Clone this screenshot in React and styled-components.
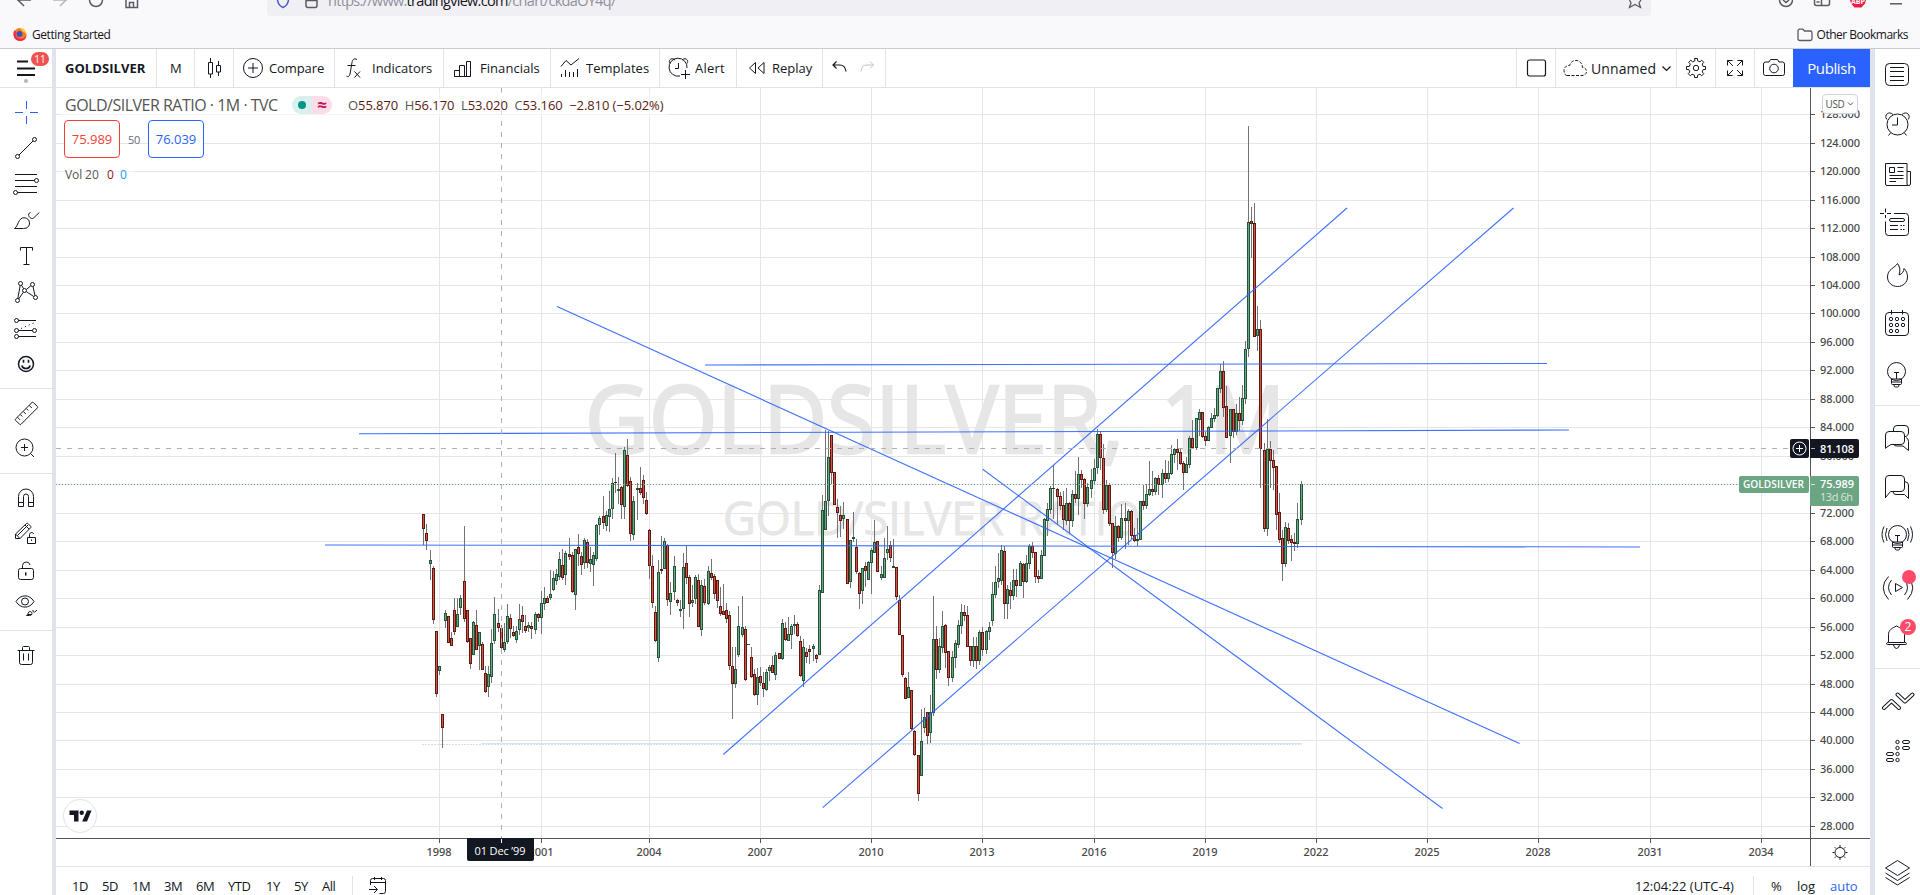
import React from 'react';
import styled, { createGlobalStyle } from 'styled-components';

const GlobalStyle = createGlobalStyle`
    * {
        box-sizing: border-box;
    }
    html, body {
        margin: 0;
        padding: 0;
        overflow: hidden;
    }
    body {
        font-family: "Open Sans", "Noto Sans", sans-serif;
        color: #131722;
        background: #fff;
    }
`;

const Page = styled.div`
    display: flex;
    flex-direction: column;
    width: 1920px;
    height: 895px;
    overflow: hidden;
    background: #fff;
`;

/* ---------- browser chrome ---------- */

const Browser = styled.header`
    display: flex;
    flex-direction: column;
    height: 49px;
    flex: none;
    background: #f9f9fb;
    border-bottom: 1px solid #cccccc;
`;

const NavRow = styled.div`
    display: flex;
    height: 16px;
    flex: none;
`;

const NavButtons = styled.div`
    width: 267px;
    height: 16px;
`;

const AddressBar = styled.div`
    display: flex;
    width: 1384px;
    height: 16px;
    background: #f0f0f4;
    border-radius: 0 0 4px 4px;
`;

const Address = styled.div`
    width: 1292px;
    height: 16px;
    margin-left: 1px;
    font-size: 14.5px;
    line-height: 2px;
    letter-spacing: ${({ $track }) => $track || 0}px;
    color: #8f8f9d;
    white-space: pre;
    b {
        font-weight: 400;
        color: #15141a;
    }
`;

const BookmarkRow = styled.div`
    display: flex;
    justify-content: space-between;
    align-items: center;
    height: 32px;
    padding: 5px 12px 0 12px;
`;

const Bookmark = styled.div`
    display: flex;
    align-items: center;
    gap: ${({ $gap }) => $gap}px;
    font-size: 12px;
    letter-spacing: ${({ $track }) => $track}px;
    color: #15141a;
`;

/* ---------- application frame ---------- */

const Workspace = styled.div`
    display: flex;
    flex: 1;
    min-height: 0;
`;

const LeftColumn = styled.nav`
    display: flex;
    flex-direction: column;
    width: 56px;
    flex: none;
    border-right: 4px solid #e0e3eb;
`;

const MenuButton = styled.div`
    position: relative;
    height: 39px;
    flex: none;
    border-bottom: 1px solid #e0e3eb;
`;

const MenuBadge = styled.span`
    position: absolute;
    left: 31px;
    top: 3px;
    width: 18px;
    height: 14px;
    border-radius: 8px;
    background: #ef5350;
    color: #fff;
    font-size: 10px;
    line-height: 14px;
    text-align: center;
`;

const ToolGroup = styled.div`
    display: flex;
    flex-direction: column;
    padding: 6px 0;
    border-bottom: ${({ $last }) => ($last ? 'none' : '1px solid #e0e3eb')};
`;

const Tool = styled.div`
    height: 36px;
    padding: 4px 12px;
    color: ${({ $active }) => ($active ? '#2962ff' : '#131722')};
`;

const Center = styled.main`
    display: flex;
    flex-direction: column;
    width: 1814px;
    flex: none;
`;

const TopBar = styled.div`
    display: flex;
    height: 39px;
    flex: none;
    border-bottom: 1px solid #e0e3eb;
`;

const Cell = styled.div`
    display: flex;
    align-items: center;
    width: ${({ $w }) => $w}px;
    padding-left: ${({ $pad }) => $pad || 0}px;
    gap: ${({ $gap }) => $gap || 0}px;
    border-right: ${({ $open }) => ($open ? 'none' : '1px solid #e0e3eb')};
    font-size: ${({ $size }) => $size || 13}px;
    font-weight: ${({ $bold }) => ($bold ? 700 : 400)};
    letter-spacing: ${({ $track }) => $track || 0}px;
    white-space: nowrap;
`;

const Filler = styled.div`
    flex: 1;
    border-right: 1px solid #e0e3eb;
`;

const Publish = styled.div`
    width: 77px;
    background: #2962ff;
    color: #fff;
    font-size: 15px;
    letter-spacing: -0.4px;
    line-height: 38px;
    text-align: center;
`;

const ChartArea = styled.section`
    position: relative;
    height: 779px;
    flex: none;
    border-bottom: 1px solid #e0e3eb;
`;

const ChartSvg = styled.svg`
    display: block;
    width: 1814px;
    height: 778px;
    font-family: "Open Sans", "Noto Sans", sans-serif;
`;

const Legend = styled.div`
    position: absolute;
    left: 5px;
    top: 4px;
    display: flex;
    flex-direction: column;
    align-items: flex-start;
`;

const LegendRow = styled.div`
    display: flex;
    align-items: center;
    height: ${({ $h }) => $h}px;
    padding: 0 4px;
    background: rgba(255, 255, 255, 0.5);
    white-space: pre;
`;

const Title = styled.span`
    width: 227px;
    font-size: 16px;
    letter-spacing: -0.5px;
    color: #555;
`;

const StatusPill = styled.span`
    display: flex;
    width: 40px;
    height: 18px;
    border-radius: 9px;
    overflow: hidden;
`;

const PillHalf = styled.span`
    display: flex;
    align-items: center;
    justify-content: center;
    width: 20px;
    background: ${({ $bg }) => $bg};
    color: #c2185b;
    font-size: 17px;
    font-weight: 700;
    line-height: 16px;
`;

const Dot = styled.i`
    width: 8px;
    height: 8px;
    border-radius: 50%;
    background: #009688;
`;

const Ohlc = styled.span`
    margin-left: 16px;
    font-size: 13px;
    letter-spacing: -0.08px;
    color: #5b1a13;
    em {
        font-style: normal;
        color: #555;
    }
`;

const Quotes = styled.div`
    display: flex;
    align-items: center;
    height: 38px;
    margin: 3px 0 7px;
    padding-left: 3px;
    gap: 8px;
`;

const Quote = styled.div`
    width: 56px;
    height: 38px;
    border: 1px solid currentColor;
    border-radius: 4px;
    background: #fff;
    color: ${({ $color }) => $color};
    font-size: 13px;
    line-height: 36px;
    text-align: center;
`;

const Spread = styled.span`
    width: 12px;
    color: #6a6d78;
    font-size: 11px;
    letter-spacing: -0.2px;
`;

const Volume = styled.span`
    font-size: 12px;
    width: ${({ $w }) => $w}px;
    letter-spacing: -0.1px;
    color: ${({ $color }) => $color};
`;

const Currency = styled.div`
    position: absolute;
    left: 1766px;
    top: 6px;
    display: flex;
    align-items: center;
    justify-content: center;
    gap: 3px;
    width: 36px;
    height: 20px;
    border: 1px solid #d1d4dc;
    border-radius: 4px;
    background: #fff;
    color: #555;
    font-size: 10px;
    letter-spacing: -0.4px;
`;

const Brand = styled.div`
    position: absolute;
    left: 7px;
    top: 711px;
    width: 34px;
    height: 34px;
    border: 1px solid #e0e3eb;
    border-radius: 50%;
    background: #fff;
`;

const BottomBar = styled.div`
    display: flex;
    align-items: center;
    height: 28px;
    flex: none;
    padding: 10px 11px 0 16px;
    font-size: 13px;
`;

const Range = styled.span`
    width: ${({ $w }) => $w}px;
    letter-spacing: -0.5px;
`;

const BarRule = styled.i`
    width: 1px;
    height: 20px;
    margin-right: ${({ $gap }) => $gap}px;
    background: #e0e3eb;
`;

const Clock = styled.span`
    width: 118px;
    margin-left: auto;
    letter-spacing: 0;
`;

const Scale = styled.span`
    width: ${({ $w }) => $w}px;
    color: ${({ $on }) => ($on ? '#2962ff' : '#131722')};
`;

const RightColumn = styled.aside`
    display: flex;
    flex-direction: column;
    width: 50px;
    flex: none;
    border-left: 5px solid #e0e3eb;
`;

const WidgetGroup = styled.div`
    padding: ${({ $top }) => $top}px 0 ${({ $bottom }) => $bottom || 0}px;
    border-bottom: ${({ $rule }) => ($rule ? '1px solid #e0e3eb' : 'none')};
    margin-top: ${({ $push }) => ($push ? 'auto' : 0)};
`;

const Widget = styled.div`
    position: relative;
    height: 50px;
    padding: 7px 4px;
`;

const WidgetBadge = styled.span`
    position: absolute;
    left: ${({ $r, $x }) => $x - $r}px;
    top: ${({ $r, $y }) => $y - $r}px;
    width: ${({ $r }) => $r * 2}px;
    height: ${({ $r }) => $r * 2}px;
    border-radius: 50%;
    background: #ff4a68;
    color: #fff;
    font-size: 12px;
    line-height: ${({ $r }) => $r * 2}px;
    text-align: center;
`;

const Svg = styled.svg`
    display: block;
    flex: none;
`;

const Icon = ({ w = 28, h = 28, children, ...rest }) => (
    <Svg width={w} height={h} viewBox={`0 0 ${w} ${h}`} fill="none" stroke="currentColor" strokeWidth="1" {...rest}>
        {children}
    </Svg>
);

/* ---------- left toolbar icons, 28x28 ---------- */

const drawTools = [
    <path d="M14.5 3v8M14.5 18v8M3 14.5h8M18 14.5h8" />,
    <>
        <path d="M7 21L21 7" />
        <circle cx="5.5" cy="22.5" r="2" />
        <circle cx="22.5" cy="5.5" r="2" />
    </>,
    <>
        <path d="M3 4.5h22M3 10.5h19.5M3 16.5h22M5.5 22.5H25" />
        <circle cx="24.5" cy="10.5" r="2" />
        <circle cx="3.5" cy="22.5" r="2" />
    </>,
    <path d="M2.5 22.5h9c4 0 6.2-2.5 6-5.6-.2-3-2.4-5.2-5.3-5.2C6 11.7 6.5 20 2.5 22.500zM18.5 6.5c-2 .5-2.5 2.5-1.3 4.200s3 2.4 4.3 1.3L27.3 6.5" />,
    <path d="M8.5 8.5v-3h12v3M14.5 5.5v17M11.5 22.5h6" />,
    <>
        <path d="M8.2 7.5L5.8 20.5M9.5 7.2l2.200 3.6M14.3 11.5l4.5-3.7M21 8.5l2 9M6.7 21l4.6-6.7M14.3 13.6l7.4 4.9" />
        <circle cx="8.5" cy="5.5" r="2" />
        <circle cx="20.5" cy="6.5" r="2" />
        <circle cx="12.5" cy="12.5" r="2" />
        <circle cx="5.5" cy="22.5" r="2" />
        <circle cx="23.5" cy="19.5" r="2" />
    </>,
    <>
        <path d="M6.5 6.5H24M6.5 16.5h14M6.5 22.5H24" />
        <path d="M9 14.5L24 8" strokeDasharray="1.2 3" />
        <circle cx="4.5" cy="6.5" r="2" />
        <circle cx="4.5" cy="16.5" r="2" />
        <circle cx="22.5" cy="16.5" r="2" />
        <circle cx="4.5" cy="22.5" r="2" />
    </>,
    <>
        <circle cx="14" cy="14" r="7.5" strokeWidth="1.5" />
        <path d="M9.8 15.5c1 4 7.4 4 8.4 0M11.5 9.8v3M16.5 9.8v3" strokeWidth="1.6" />
    </>,
];

const measureTools = [
    <path d="M20 3.500q.7-.7 1.4 0l4 4q.7.700 0 1.4L9 25.300q-.7.700-1.4 0l-4-4q-.7-.7 0-1.400zM17.3 6.5l2.5 2.5M14.3 9.5l2 2M11.3 12.5l2.5 2.5M8.3 15.5l2 2M5.5 18.3l2.5 2.5" />,
    <path d="M21 12.5a8.5 8.5 0 1 1-17 0a8.5 8.5 0 0 1 17 0zM12.5 9v7M9 12.5h7M18.6 18.6l3.4 3.4" />,
];

const lockTools = [
    <path d="M6.5 22.5v-10a7.5 7.5 0 0 1 15 0v10h-5v-10a2.5 2.5 0 0 0-5 0v10zM6.5 18.5h5M16.5 18.5h5" />,
    <path d="M3.5 18.5v-4.5L14.5 3.500q.7-.7 1.4 0l2.800 2.800q.7.700 0 1.400L8 18.500zM3.5 14l4.5 4.5M5.5 15.5L16 5M13 5l4 4M15.5 17.5h8v6h-8zM17.5 17.5v-3c0-2.500 4-2.500 4-.5M19.5 19.5v1.5" />,
    <path d="M8.5 12.5h11q2 0 2 2v7q0 2-2 2h-11q-2 0-2-2v-7q0-2 2-2zM10.5 12.5v-3a3.8 3.8 0 0 1 7.5-.5M14 16.5v3M13.5 16.5v3" />,
    <path d="M4 9.5C8.5 2 17.5 2 22 9.500C17.5 17 8.5 17 4 9.500zM16.5 9.5a3.5 3.5 0 1 1-7 0a3.5 3.5 0 0 1 7 0zM14.5 23.5c2 0 1-4 3.5-4s3 4-.5 4zM16 22.5h4M21 18c-.5 2 1 2.500 1.700 2L25 18" />,
];

const trash = (
    <path d="M5.5 9.5h17M10.5 9.5v-3q0-1 1-1h5q1 0 1 1v3M7.5 9.5v12q0 2 2 2h9q2 0 2-2v-12M11.5 12.5v7M16.5 12.5v7" />
);

/* ---------- right sidebar icons, 36x36 ---------- */

const bulb = (
    <>
        <circle cx="17.5" cy="14.5" r="9" />
        <path d="M12.5 22v4.500q0 1 1 1h8q1 0 1-1V22zM12.5 25h10M15 28q0 2 1.5 2h2q1.5 0 1.5-2M17.5 15v7M15 15.5h5" />
    </>
);

const watchWidgets = [
    <>
        <rect x="6.5" y="6.5" width="23" height="22" rx="4" />
        <path d="M11 10.5h14M11 14.5h14M11 19.5h14M11 23.5h14" />
    </>,
    <path d="M29 17.5a10.5 10.5 0 1 1-21 0a10.5 10.5 0 0 1 21 0zM18.5 10.5v7.500h-5.500M7.8 12.5C4.5 8 10 3.5 14 7.5M29.2 12.5C32.500 8 27 3.5 23 7.5M11.5 26l-2 2.5M25.5 26l2 2.5" />,
    <path d="M29.5 28.5h-21.500q-1.500 0-1.500-1.500V6.500h21.500v20.500q0 1.500 1.700 1.500t1.800-1.500v-12.500h-3.500M10.5 10.5h5v5h-5zM18.5 10.5h6M18.5 14.5h6M10.5 18.5h14M10.5 21.5h14M10.5 24.5h6.5" />,
    <path d="M6.5 1.5v4M6.5 8v3M1 6.5h4M8 6.5h4M15 6.5h11.500q3 0 3 3v16q0 3-3 3h-17q-3 0-3-3V14.5M12 11.5h12q1.500 0 1.500 1.500t-1.500 1.500H12q-1.500 0-1.500-1.500t1.500-1.500zM11 18.5h8M21.5 18.5h1.5M24 18.5h1.5M11 22.5h8M21.5 22.5h1.5M24 22.5h1.5" />,
    <path d="M18.5 6.5C16 11 8.5 12 8.5 20c0 5.500 4.500 9.500 10 9.500s10-4 10-9.500c0-3.500-1-6-3.500-8.500 0 3-2 5.500-5 6.500 1.500-4 1-8.500-1.500-11.500z" />,
    <>
        <rect x="6.5" y="5.5" width="23" height="23" rx="3.5" />
        <path d="M12.5 3v4.5M23.5 3v4.5" />
        {[[12, 12], [18, 12], [24, 12], [12, 18], [18, 18], [24, 18], [12, 24], [18, 24]].map(([x, y]) => (
            <circle key={`${x}-${y}`} cx={x} cy={y} r="1.7" />
        ))}
    </>,
    bulb,
];

const socialWidgets = [
    <path d="M6.5 28.5V15q0-3.500 3.500-3.500h12q3.500 0 3.500 3.500v6q0 3.500-3.500 3.500h-10l-5.500 3.500M14.5 11.5V9q0-3.500 3.500-3.500h8q3.500 0 3.500 3.500v4q0 2-2.500 3.500h-1.500M27 17.500q2.500 1 2.500 4v9l-5.500-4.500h-6q-3 0-3-1.500" />,
    <>
        <path d="M6.5 28V9q0-3.500 3.500-3.500h12q3.500 0 3.500 3.500v9q0 3.500-3.500 3.500h-10.500l-5 6" />
        <path d="M25.5 11.500q4 .5 4 3.500v13.500l-4-4h-8.500q-2.500 0-3-2.500" />
    </>,
    <>
        <g transform="translate(1 0)">{bulb}</g>
        <path d="M8 8q-3 6.500 0 13M5 6.500q-4 8 0 16M28.5 8q3 6.500 0 13M31.5 6.500q4 8 0 16" />
    </>,
    <path d="M16.5 13.5v8l7-4zM12.5 10q-6 7.500 0 15M9.5 6.500q-10.500 11 0 23M25.5 10q6 7.500 0 15M28.5 6.500q10.500 11 0 23" />,
    <path d="M9.5 22.5V14.5c0-4.500 4-6.500 6-7.500q2-2 4 0c2 1 6 3 6 7.500v8M9.5 22.500q-2 0-2 1t1 1h18q1 0 1-1t-2-1zM14.5 25q1 3.500 3 3.500t3-3.500" />,
];

const streamWidgets = [
    <g strokeLinecap="round" strokeLinejoin="round">
        <path d="M5 25l7.500-7L20 25M18.5 11.5l7.500 7L33.5 11.5" strokeWidth="4" />
        <path d="M5 25l7.500-7L20 25M18.5 11.5l7.500 7L33.5 11.5" strokeWidth="2" stroke="#fff" />
    </g>,
    <>
        {[9, 15, 21, 27].map((y) => <circle key={y} cx="18.5" cy={y} r="1.7" />)}
        <rect x="7.5" y="19.5" width="7" height="3" rx="1.5" />
        <rect x="7.5" y="25.5" width="7" height="3" rx="1.5" />
        <rect x="23.5" y="7.5" width="7" height="3" rx="1.5" />
        <rect x="23.5" y="13.5" width="7" height="3" rx="1.5" />
    </>,
];

/* ---------- chart geometry (window pixels) ---------- */

const priceTicks = Array.from({ length: 26 }, (_, i) => ({
    label: `${128 - i * 4}.000`,
    y: Math.round(114.22 + i * 28.465),
}));

const yearTicks = [
    [439, '1998'], [541, '2001'], [649, '2004'], [760, '2007'], [871, '2010'],
    [982, '2013'], [1094, '2016'], [1205, '2019'], [1316, '2022'], [1427, '2025'],
    [1538, '2028'], [1650, '2031'], [1761, '2034'],
];

const trendLines = [
    [557, 306.5, 1519.6, 743.5],
    [705, 365, 1547, 363.5],
    [359, 433.8, 1569, 430],
    [325, 545, 1640, 547],
    [723.3, 754.5, 1347, 208],
    [822.7, 807.7, 1513.5, 208],
    [982.7, 469.3, 1442.5, 808.5],
];

// Monthly candles, in thirds of a pixel from each block's origin:
// x, high, body top, body bottom, low, g(reen) or r(ed)
const candleBlocks = [
    {
        x: 400,
        y: 380,
        rows: `70 402 402 446 494 r;79 432 459 483 510 r;91 510 540 552 600 g;100 558 564 720 732 r;
109 753 753 942 951 r;118 858 858 873 885 g;127 1002 1002 1044 1104 r;136 690 699 723 744 g;
145 708 708 789 789 r;154 756 774 798 798 r;163 654 690 756 765 r;172 654 702 741 741 g;
181 645 654 684 705 g;193 438 603 717 726 r;202 690 690 786 789 r;211 774 774 852 867 r;
220 723 726 825 825 g;229 690 735 810 810 r;238 756 756 798 870 g;247 786 792 870 870 r;
256 858 879 936 939 r;265 858 882 921 951 g;274 747 789 891 909 g;283 651 702 783 792 g;
295 687 729 744 756 r;304 735 744 804 807 r;313 729 786 810 816 g;322 672 708 786 792 g;
331 702 714 747 774 r;340 738 756 768 771 r;349 738 753 780 789 g;358 672 717 750 765 g;
367 678 705 726 759 r;376 705 738 753 759 r;385 726 735 744 756 g;394 726 738 747 777 r;
406 696 702 750 762 g;415 699 702 714 726 r;424 633 669 714 762 g;433 621 654 672 690 g;
442 648 654 669 669 r;451 570 642 654 660 g;460 573 594 630 633 g;469 567 582 603 615 g;
478 516 537 591 600 g;487 507 555 594 600 r;496 513 519 585 615 g;508 474 522 531 540 r;
517 516 525 636 639 r;526 507 507 645 690 g;535 462 501 522 558 r;544 516 528 555 585 r;
553 474 480 549 567 g;562 477 486 549 564 r;571 501 537 552 576 g;580 516 525 555 618 g;
589 432 435 537 543 g;598 408 414 435 465 g;610 348 408 429 447 r;619 393 405 438 453 g;
628 333 387 411 456 g;637 294 309 387 417 g;646 219 306 309 339 r;655 291 327 333 372 g;
664 318 321 375 417 r;673 201 210 381 417 g;682 177 225 318 321 r;691 291 303 462 483 r;
700 348 363 465 480 g;712 309 324 330 420 g;721 261 324 339 345 r;730 285 300 354 372 r;
739 336 360 402 405 r;748 447 450 558 597 r;757 525 558 669 684 r;766 678 696 783 786 r;
775 540 576 834 846 g;784 468 567 573 582 r;793 474 483 567 567 g;802 492 495 660 678 r;
811 606 639 666 705 g;823 528 558 636 660 g;832 657 660 669 678 r;841 660 687 693 711 g;
850 519 561 687 747 g;859 498 549 594 612 r;868 585 591 672 711 r;877 615 660 669 681 g;
886 585 591 657 672 g;895 582 600 741 741 r;904 600 615 750 768 g;913 597 618 669 675 r;
925 558 573 672 675 g;934 537 579 594 600 r;943 582 588 642 657 r;952 600 600 663 684 r`,
    },
    {
        x: 700,
        y: 420,
        rows: `61 501 558 582 588 r;70 492 573 585 585 r;79 549 570 597 609 r;88 573 585 738 750 r;
97 681 738 792 897 r;106 681 747 792 804 g;115 558 618 705 711 g;127 528 621 645 651 g;
136 618 627 780 783 r;145 672 672 675 675 g;154 681 711 771 774 r;163 747 762 825 828 r;
172 744 771 825 855 g;181 741 768 789 798 r;190 756 789 807 831 r;199 747 756 810 813 g;
208 735 741 753 783 g;217 708 735 759 759 r;226 696 705 765 780 g;238 699 699 717 717 r;
247 597 609 717 720 g;256 606 624 660 663 r;265 591 642 663 663 g;274 612 618 645 687 g;
283 585 612 618 642 g;292 606 612 648 651 r;301 648 663 768 771 r;310 657 681 783 801 g;
319 684 696 711 729 r;328 675 687 696 732 r;340 672 678 687 723 g;349 702 705 717 729 r;
358 495 510 705 705 g;367 225 270 519 519 g;376 30 243 330 330 g;385 33 111 243 288 g;
394 45 45 159 192 r;403 156 156 255 255 r;412 237 261 279 354 r;421 258 285 303 351 r;
430 246 285 297 327 g;442 297 297 492 492 r;451 360 360 486 504 g;460 276 351 357 366 g;
469 357 381 456 462 r;478 456 459 522 567 r;487 444 444 513 552 g;496 426 438 453 501 r;
505 423 426 480 480 g;514 384 390 429 522 g;523 300 366 399 399 g;532 363 363 456 456 r;
544 438 462 474 480 g;553 354 414 474 474 g;562 318 387 399 420 g;571 363 375 414 426 r;
580 357 438 444 444 g;589 441 441 531 540 r;598 525 540 645 645 r;607 645 645 765 771 r;
616 771 774 837 837 r;625 756 801 834 834 g;634 810 810 927 930 r;643 930 933 1005 1008 r;
655 1005 1005 1122 1143 r;664 867 963 1068 1068 g;673 864 891 924 939 g;682 876 876 948 972 r;
691 825 876 939 969 g;700 528 657 879 888 g;709 618 657 750 777 r;718 654 678 750 759 g;
727 573 618 684 699 g;736 612 615 699 744 r;745 693 693 774 798 r;757 693 711 774 786 g;
766 660 669 714 744 g;775 600 615 675 684 g;784 552 576 618 642 g;793 555 576 588 603 r;
802 558 585 681 681 r;811 678 678 723 738 r;820 651 678 723 741 g;829 651 678 723 747 r;
838 630 636 723 735 g;847 621 636 690 708 r;859 630 633 690 702 g;868 606 621 636 660 g;
877 486 522 603 618 g;886 438 486 525 534 g;895 399 474 486 504 g;904 375 390 483 495 g;
913 378 393 552 597 r;922 495 507 552 597 g;931 486 510 528 567 r;940 447 480 528 540 g;
949 447 480 498 531 r`,
    },
    {
        x: 1000,
        y: 340,
        rows: `61 663 669 738 738 g;70 669 672 726 774 r;79 645 669 726 729 g;88 612 618 672 687 g;
97 606 618 639 654 r;106 636 636 711 729 r;115 690 708 717 729 r;124 630 645 717 717 g;
133 534 537 648 648 g;142 489 507 543 588 g;151 438 444 510 522 g;160 375 444 447 537 r;
172 444 447 471 552 r;181 456 468 498 510 r;190 453 495 540 570 r;199 444 489 543 555 g;
208 486 489 543 579 r;217 450 462 543 561 g;226 393 462 477 489 r;235 351 402 477 525 g;
244 390 402 420 444 r;253 414 417 492 537 r;262 429 441 492 501 g;274 387 420 447 474 g;
283 357 384 423 432 g;292 267 282 384 402 g;301 273 282 354 390 r;310 312 354 510 522 r;
319 420 435 510 516 g;328 429 435 552 558 r;337 549 549 639 684 r;346 528 558 642 657 g;
355 555 558 594 606 r;364 492 534 594 600 g;376 489 534 543 627 r;385 507 513 543 615 g;
394 510 513 588 597 r;403 564 585 603 606 r;412 534 597 603 618 g;421 483 483 600 600 g;
430 435 483 498 510 r;439 432 462 498 507 g;448 363 447 465 468 g;457 393 447 456 468 r;
466 411 414 456 465 g;475 405 414 435 465 r;487 387 399 435 474 g;496 360 399 417 429 r;
505 363 399 417 426 g;514 315 342 402 405 g;523 324 327 345 369 g;532 297 327 339 390 r;
541 324 336 372 375 r;550 363 369 399 450 r;559 351 372 399 399 g;568 288 294 375 384 g;
577 240 294 324 327 r;589 234 234 324 330 g;598 207 216 240 288 g;607 216 216 291 294 r;
616 276 288 303 318 r;625 258 261 303 303 g;634 219 234 264 264 g;643 204 225 237 246 g;
652 144 144 228 231 g;661 72 93 147 159 g;670 63 93 204 231 r;679 138 198 294 294 r;
691 207 207 288 369 g;700 207 207 276 294 r;709 192 219 276 285 g;718 171 219 243 273 r;
727 135 174 243 255 g;736 3 27 177 192 g`,
    },
    {
        x: 1180,
        y: 110,
        rows: `205 48 336 717 741 g;214 291 333 342 444 r;223 279 339 681 681 r;232 588 657 678 723 g;
241 630 657 1017 1134 r;253 999 1020 1257 1266 r;262 927 1017 1257 1278 g;271 993 1017 1053 1134 r;
280 1020 1050 1074 1140 r;289 1068 1068 1215 1260 r;298 1149 1206 1290 1299 r;307 1260 1284 1362 1413 r;
316 1236 1251 1362 1371 g;325 1239 1254 1293 1302 r;334 1275 1287 1299 1353 r;343 1269 1296 1302 1323 r;
352 1179 1227 1302 1314 g;364 1113 1122 1230 1245 g`,
    },
];

const candles = candleBlocks.flatMap(({ x: ox, y: oy, rows }) =>
    rows.split(';').map((row) => {
        const [x, high, top, bottom, low, tone] = row.trim().split(' ');
        const py = (v) => oy + Math.round(v / 3);
        return { x: ox + Math.floor(x / 3), high: py(high), top: py(top), bottom: py(bottom), low: py(low), up: tone === 'g' };
    })
);

const Candle = ({ x, high, top, bottom, low, up }) => {
    const height = Math.max(1, bottom - top);
    return (
        <g shapeRendering="crispEdges">
            <rect x={x} y={high} width="1" height={Math.max(1, low - high)} fill="#737375" />
            <rect x={x - 1} y={top} width="3" height={height} fill={up ? '#225437' : '#5b1a13'} />
            {height > 2 && <rect x={x} y={top + 1} width="1" height={height - 2} fill={up ? '#6ba583' : '#d75442'} />}
        </g>
    );
};

const Chart = () => (
    <ChartSvg viewBox="56 88 1814 778">
        <g fill="#e6e6e6" shapeRendering="crispEdges">
            {priceTicks.map(({ y }) => <rect key={y} x="56" y={y} width="1754" height="1" />)}
            {yearTicks.map(([x]) => <rect key={x} x={x} y="88" width="1" height="750" />)}
        </g>

        {/* watermark */}
        <g fill="#e6e6e6" stroke="#e6e6e6">
            <text x="585" y="452.5" fontSize="94" strokeWidth="2.6" textLength="539" lengthAdjust="spacingAndGlyphs">GOLDSILVER,</text>
            <text x="1161" y="452.5" fontSize="94" strokeWidth="2.6" textLength="124" lengthAdjust="spacingAndGlyphs">1M</text>
            <text x="723" y="535" fontSize="45" strokeWidth="0.8" textLength="281" lengthAdjust="spacingAndGlyphs">GOLD/SILVER</text>
            <text x="1017" y="535" fontSize="45" strokeWidth="0.8" textLength="124" lengthAdjust="spacingAndGlyphs">RATIO</text>
        </g>

        <g shapeRendering="crispEdges">
            <rect x="481" y="743" width="821" height="1" fill="#cfe6f6" />
            <path d="M422 744.5H1302" stroke="#d5e0dc" strokeDasharray="2 1" />
        </g>

        {candles.map((c) => <Candle key={c.x} {...c} />)}

        <g stroke="#2962ff" strokeWidth="1.1" strokeOpacity="0.9">
            {trendLines.map(([x1, y1, x2, y2]) => <line key={`${x1}`} x1={x1} y1={y1} x2={x2} y2={y2} />)}
        </g>

        <g shapeRendering="crispEdges">
            <path d="M56 484.5H1740" stroke="#6ba583" strokeDasharray="1 2" />
            <path d="M56 448.5H1790M501.5 88V838" stroke="#b0b0b0" strokeDasharray="5 6" />
            <rect x="56" y="838" width="1814" height="1" fill="#555" />
            <rect x="1810" y="88" width="1" height="778" fill="#555" />
            {priceTicks.map(({ y }) => <rect key={y} x="1811" y={y} width="4" height="1" fill="#555" />)}
            {yearTicks.map(([x]) => <rect key={x} x={x} y="839" width="1" height="4" fill="#555" />)}
        </g>

        <g fill="#484848" fontSize="11" fontFamily="Noto Sans, Open Sans, sans-serif" fontWeight="500">
            {priceTicks.map(({ y, label }) => (
                <text key={y} x="1820" y={y + 4} textLength={label.length > 6 ? 40 : 34}>{label}</text>
            ))}
            {yearTicks.map(([x, label]) => (
                <text key={x} x={x} y="856" textAnchor="middle">{label}</text>
            ))}
        </g>

        {/* crosshair labels */}
        <rect x="1790" y="439" width="19" height="19" rx="2" fill="#131722" />
        <g stroke="#fff" fill="none">
            <circle cx="1799.5" cy="448.5" r="6.5" />
            <path d="M1796 448.5h7M1799.5 445v7" />
        </g>
        <path d="M1810 439h47q2 0 2 2v15q0 2-2 2h-47z" fill="#131722" />
        <rect x="1811" y="448" width="4" height="1" fill="#b2b5be" />
        <text x="1820" y="452.5" fontSize="11" fontWeight="600" fill="#fff" textLength="34">81.108</text>
        <path d="M467 838h67v21q0 2-2 2h-63q-2 0-2-2z" fill="#131722" />
        <rect x="501" y="839" width="1" height="4" fill="#fff" />
        <text x="474.5" y="855" fontSize="11" fontWeight="500" fill="#fff" textLength="51">01 Dec ’99</text>

        {/* last price */}
        <rect x="1739" y="476" width="70" height="17" rx="2" fill="#6ba583" />
        <text x="1743" y="488" fontSize="11" fontWeight="600" fill="#fff" textLength="61" lengthAdjust="spacingAndGlyphs">GOLDSILVER</text>
        <path d="M1810 476h47q2 0 2 2v26q0 2-2 2h-47z" fill="#6ba583" />
        <rect x="1811" y="484" width="4" height="1" fill="#d5e8dc" />
        <text x="1820" y="488" fontSize="11" fontWeight="600" fill="#fff" textLength="34">75.989</text>
        <text x="1820" y="501" fontSize="11" fontWeight="500" fill="#d5e8dc" textLength="33">13d 6h</text>

        <g stroke="#131722" fill="none">
            <circle cx="1840" cy="852.5" r="5" />
            <path d="M1840 845v2M1840 858v2M1832.5 852.5h2M1845.5 852.5h2M1834.7 847.2l1.4 1.4M1845.3 847.2l-1.4 1.4M1834.7 857.8l1.4-1.4M1845.3 857.8l-1.4-1.4" />
        </g>
    </ChartSvg>
);

const BrowserChrome = () => (
    <Browser>
        <NavRow>
            <NavButtons>
                <Icon w={267} h={16} color="#5b5b66" strokeWidth="1.5">
                    <path d="M17 0H31M18 0l6 6" />
                    <path d="M53 0H67M66 0l-6 6" stroke="#b5b5bd" />
                    <path d="M89.5 0a6.5 6.5 0 0 0 13 0M126 0v7.500h11.500V0M129.5 7.5V2.500h4v5" />
                </Icon>
            </NavButtons>
            <AddressBar>
                <Icon w={60} h={16} color="#5b5b66" strokeWidth="1.5">
                    <path d="M10.5 0c.5 4 3 6.500 5.500 7.500C18.500 6.500 21 4 21.500 0" stroke="#4a5bd0" />
                    <path d="M39 0v5.500q0 2 2 2h7q2 0 2-2V0M39 .5h11" />
                </Icon>
                <Address $track={-0.7}>https://www.<b>tradingview.com</b>/chart/ckdaOY4q/</Address>
                <Icon w={24} h={16} color="#5b5b66" strokeWidth="1.3">
                    <path d="M9.5 0L11 3l-1.500 4.500 5.500-3 5.500 3L19 3l2-3" />
                </Icon>
            </AddressBar>
            <Icon w={269} h={16} color="#5b5b66" strokeWidth="1.5">
                <path d="M128.5 0a6.5 6.5 0 0 0 13 0M132 0l3 2.500L138 0" />
                <path d="M163.5 0v3.500q0 2 2 2h11q2 0 2-2V0M170.5 0v5.5M165.5 2h3" />
                <path d="M199 0l1 3.500 3.500 4h7l3.500-4 1-3.500z" fill="#ed1e45" stroke="none" />
                <text x="207" y="3.5" fontSize="7" fontWeight="700" fill="#fff" stroke="none" textAnchor="middle">ABP</text>
                <path d="M239 3.8h12" />
            </Icon>
        </NavRow>
        <BookmarkRow>
            <Bookmark $gap={5} $track={-0.42}>
                <Icon w={15} h={15} stroke="none">
                    <circle cx="8" cy="7.5" r="6.5" fill="#ff7a1a" />
                    <path d="M1.5 5C1 10 3.500 14 8 14s6.500-3 6.500-6c-1 3-4 4.500-7 3.500S3 8.500 4 5.500L3 3z" fill="#f2294e" />
                    <circle cx="7.5" cy="7" r="3" fill="#3b4fc4" />
                    <path d="M8 1c3 0 6.500 2.500 6.500 6.500C13 5 11 5 10 3.500z" fill="#ffd43a" />
                </Icon>
                Getting Started
            </Bookmark>
            <Bookmark $gap={4} $track={-0.5}>
                <Icon w={16} h={14} color="#5b5b66" strokeWidth="1.3">
                    <path d="M1 3q0-1.800 1.800-1.800h3L7.500 3h5.700Q15 3 15 4.800v6Q15 12.500 13.200 12.500H2.800Q1 12.500 1 10.800z" />
                </Icon>
                Other Bookmarks
            </Bookmark>
        </BookmarkRow>
    </Browser>
);

const Toolbar = () => (
    <TopBar>
        <Cell $w={101} $pad={9} $bold $track={0.05}>GOLDSILVER</Cell>
        <Cell $w={38} $pad={13}>M</Cell>
        <Cell $w={39} $pad={5}>
            <Icon>
                <path d="M10.5 4v4M10.5 20v4M8.5 8.5h4v11.500h-4zM18.5 7v4M18.5 18v4M16.5 11.5h4v6.500h-4z" />
            </Icon>
        </Cell>
        <Cell $w={101} $pad={5} $gap={2} $track={-0.1}>
            <Icon>
                <circle cx="14" cy="14" r="9.5" />
                <path d="M14 9v10M9 14h10" />
            </Icon>
            Compare
        </Cell>
        <Cell $w={109} $pad={5} $gap={4}>
            <Icon>
                <path d="M17 5.5c-3-1.500-4.500 0-5 3L10 20c-.4 2.500-2 3-3.500 2.200M7.5 11.5h8M14.5 17.5l5.500 6M20 17.5l-5.500 6" />
            </Icon>
            Indicators
        </Cell>
        <Cell $w={107} $pad={5} $gap={3} $track={0.05}>
            <Icon>
                <path d="M5.5 22.5v-6h5v6zM10.5 22.5v-11h5v11zM17.5 22.5v-15h4v15zM5.5 22.5h16" />
            </Icon>
            Financials
        </Cell>
        <Cell $w={109} $pad={5} $gap={2}>
            <Icon>
                <path d="M5 12.5l5-6 5 4.500 8-6.500M5.5 20v3M9.5 16v7M13.5 18v5M17.5 18v5M21.5 15v8" />
            </Icon>
            Templates
        </Cell>
        <Cell $w={77} $pad={4} $gap={3} $track={0.2}>
            <Icon>
                <path d="M16 22a9 9 0 1 1 7-8M14.5 9v5.500H11M6 9.5C3.500 6 8 3 11 6M23 9.5C25.500 6 21 3 18 6M21.5 16v9M17 20.5h9" />
            </Icon>
            Alert
        </Cell>
        <Cell $w={86} $pad={6} $gap={1}>
            <Icon>
                <path d="M12.5 8.5v11L6.5 14zM21 8.5v11L15 14z" />
            </Icon>
            Replay
        </Cell>
        <Cell $w={63} $pad={2}>
            <Icon>
                <path d="M11.5 7.500L8 11l3.500 3.500M8 11h7q5 0 6 6.500" strokeWidth="1.2" />
            </Icon>
            <Icon color="#c1c4cd">
                <path d="M17 7.500l3.500 3.500-3.500 3.500M20.500 11h-7q-5 0-5.500 6.500" />
            </Icon>
        </Cell>
        <Filler />
        <Cell $w={39} $pad={6}>
            <Icon>
                <rect x="4.5" y="6" width="18" height="16" rx="2" strokeWidth="1.2" />
            </Icon>
        </Cell>
        <Cell $w={121} $pad={4} $gap={3} $track={0.1} $size={14}>
            <Icon>
                <path d="M7 21.5h15c2.500 0 4.500-1.500 4.500-4s-2-4-4-4c0-4-3-7-6.500-7s-5.500 2-6.500 5c-3.500 0-5.500 2-5.500 5s1.500 5 3 5z" strokeDasharray="3 1.5" />
            </Icon>
            Unnamed
            <Icon w={16} h={12}>
                <path d="M3.5 4.500l4 4 4-4" strokeWidth="1.2" />
            </Icon>
        </Cell>
        <Cell $w={39} $pad={5}>
            <Icon>
                <circle cx="14" cy="14" r="2.7" />
                <path d="M12.5 4.5h3v2.300l2.500 1 1.700-1.600 2.100 2.100-1.600 1.700 1 2.500h2.300v3h-2.300l-1 2.500 1.600 1.700-2.100 2.100-1.700-1.600-2.500 1v2.300h-3v-2.300l-2.500-1-1.700 1.600-2.100-2.100 1.600-1.700-1-2.500H4.500v-3h2.800l1-2.500-1.600-1.700 2.100-2.100 1.700 1.600 2.500-1z" />
            </Icon>
        </Cell>
        <Cell $w={39} $pad={5}>
            <Icon>
                <path d="M6.5 11.5v-5h5M6.5 6.5l5.500 5.500M16.5 6.5h5v5M21.5 6.5L16 12M6.5 16.5v5h5M6.5 21.5l5.500-5.500M21.5 16.5v5h-5M21.5 21.5L16 16" />
            </Icon>
        </Cell>
        <Cell $w={38} $pad={5} $open>
            <Icon>
                <path d="M10.5 5.5h7l1.500 2.500h3.500q2 0 2 2v9.500q0 2-2 2h-17q-2 0-2-2V10q0-2 2-2H9z" />
                <circle cx="14" cy="14.5" r="4.3" />
            </Icon>
        </Cell>
        <Publish>Publish</Publish>
    </TopBar>
);

const ranges = [['1D', 30], ['5D', 30], ['1M', 32], ['3M', 32], ['6M', 32], ['YTD', 38], ['1Y', 28], ['5Y', 28], ['All', 30]];

const App = () => (
    <Page>
        <GlobalStyle />
        <BrowserChrome />
        <Workspace>
            <LeftColumn>
                <MenuButton>
                    <Icon w={52} h={38}>
                        <path d="M17 12.5h11M17 19.5h18M17 26h18" strokeWidth="2" />
                        <circle cx="26" cy="32" r="2" fill="#b2b5be" stroke="none" />
                    </Icon>
                    <MenuBadge>11</MenuBadge>
                </MenuButton>
                <ToolGroup>
                    {drawTools.map((shape, index) => (
                        <Tool key={index} $active={index === 0}><Icon>{shape}</Icon></Tool>
                    ))}
                </ToolGroup>
                <ToolGroup>
                    {measureTools.map((shape, index) => <Tool key={index}><Icon>{shape}</Icon></Tool>)}
                </ToolGroup>
                <ToolGroup>
                    {lockTools.map((shape, index) => <Tool key={index}><Icon>{shape}</Icon></Tool>)}
                </ToolGroup>
                <ToolGroup $last>
                    <Tool><Icon>{trash}</Icon></Tool>
                </ToolGroup>
            </LeftColumn>

            <Center>
                <Toolbar />
                <ChartArea>
                    <Chart />
                    <Legend>
                        <LegendRow $h={25}>
                            <Title>GOLD/SILVER RATIO · 1M · TVC</Title>
                            <StatusPill>
                                <PillHalf $bg="#d9f0ee"><Dot /></PillHalf>
                                <PillHalf $bg="#fddde8">≈</PillHalf>
                            </StatusPill>
                            <Ohlc>
                                <em>O</em>55.870  <em>H</em>56.170  <em>L</em>53.020  <em>C</em>53.160  −2.810 (−5.02%)
                            </Ohlc>
                        </LegendRow>
                        <Quotes>
                            <Quote $color="#f23f36">75.989</Quote>
                            <Spread>50</Spread>
                            <Quote $color="#2962ff">76.039</Quote>
                        </Quotes>
                        <LegendRow $h={18}>
                            <Volume $w={42} $color="#555">Vol 20</Volume>
                            <Volume $w={13} $color="#8b1a1a">0</Volume>
                            <Volume $w={10} $color="#1199ff">0</Volume>
                        </LegendRow>
                    </Legend>
                    <Currency>
                        USD
                        <Icon w={7} h={6}><path d="M1 1.5l2.500 2.500L6 1.5" /></Icon>
                    </Currency>
                    <Brand>
                        <Icon w={32} h={32} fill="#131722" stroke="none">
                            <path d="M5.5 10.5h9v11h-4.500v-6.500H5.500zM23 10.5h4.500L23 21.5h-4.800z" />
                            <circle cx="17.7" cy="12.8" r="2.2" />
                        </Icon>
                    </Brand>
                </ChartArea>
                <BottomBar>
                    {ranges.map(([label, w]) => <Range key={label} $w={w}>{label}</Range>)}
                    <BarRule $gap={11} />
                    <Icon>
                        <path d="M6.5 13V8.500q0-2 2-2h11q2 0 2 2v11q0 2-2 2h-4M6.5 10.5h15M10.5 5v3M17.5 5v3M5 17.5h8M10 14l3.500 3.500L10 21" />
                    </Icon>
                    <Clock>12:04:22 (UTC-4)</Clock>
                    <BarRule $gap={17} />
                    <Scale $w={26}>%</Scale>
                    <Scale $w={33}>log</Scale>
                    <Scale $w={29} $on>auto</Scale>
                </BottomBar>
            </Center>

            <RightColumn>
                <WidgetGroup $top={1} $bottom={5} $rule>
                    {watchWidgets.map((shape, index) => (
                        <Widget key={index}><Icon w={36} h={36}>{shape}</Icon></Widget>
                    ))}
                </WidgetGroup>
                <WidgetGroup $top={7} $bottom={5} $rule>
                    {socialWidgets.map((shape, index) => (
                        <Widget key={index}>
                            <Icon w={36} h={36}>{shape}</Icon>
                            {index === 3 && <WidgetBadge $r={7} $x={34} $y={14} />}
                            {index === 4 && <WidgetBadge $r={8} $x={33} $y={14}>2</WidgetBadge>}
                        </Widget>
                    ))}
                </WidgetGroup>
                <WidgetGroup $top={7}>
                    {streamWidgets.map((shape, index) => (
                        <Widget key={index}><Icon w={36} h={36}>{shape}</Icon></Widget>
                    ))}
                </WidgetGroup>
                <WidgetGroup $top={0} $push>
                    <Widget>
                        <Icon w={36} h={36}>
                            <path d="M18.5 8.5l12 7.500-12 7.500-12-7.500zM6.5 21l12 7.500L30.500 21M6.5 25.500l12 7.500 12-7.500" />
                        </Icon>
                    </Widget>
                </WidgetGroup>
            </RightColumn>
        </Workspace>
    </Page>
);

export default App;
